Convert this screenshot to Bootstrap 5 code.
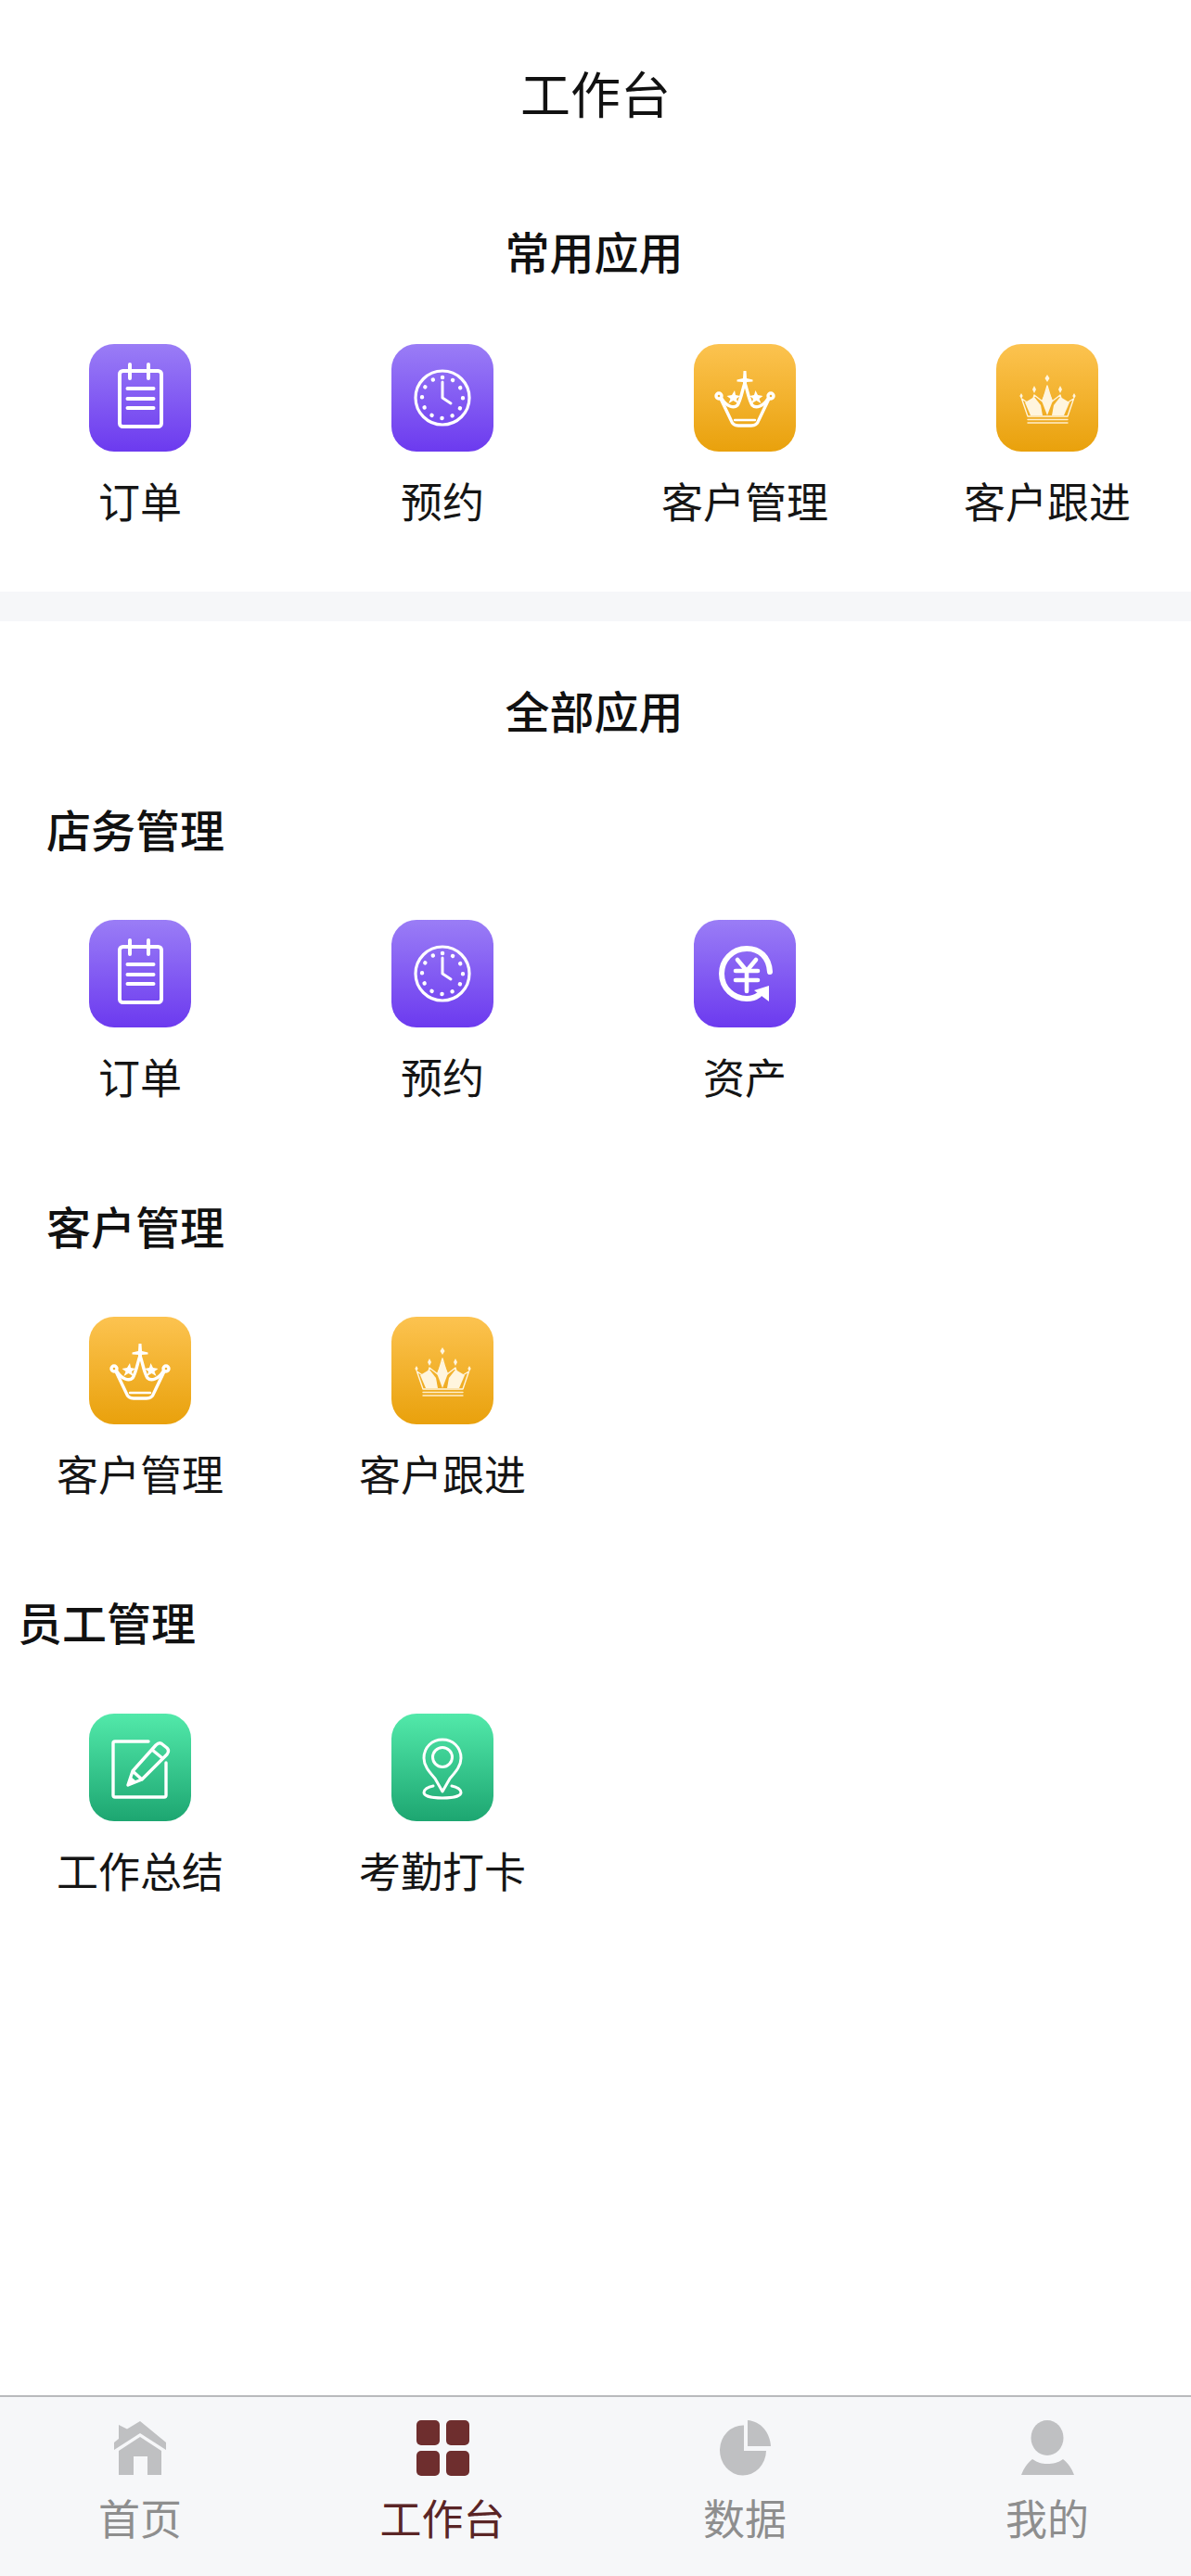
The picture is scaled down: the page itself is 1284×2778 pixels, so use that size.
<!DOCTYPE html>
<html lang="zh-CN">
<head>
    <meta charset="UTF-8">
    <meta name="viewport" content="width=device-width, initial-scale=1.0">
    <title>工作台</title>
    <link href="https://cdn.jsdelivr.net/npm/bootstrap@5.3.0/dist/css/bootstrap.min.css" rel="stylesheet">
    <style>
        html, body { height: 100%; }
        body {
            background: #fff;
            color: #111;
            font-family: "Noto Sans CJK SC", "Liberation Sans", sans-serif;
            overflow-x: hidden;
        }
        .page-wrap { min-height: 2778px; }
        .page-title { height: 206px; font-size: 54px; line-height: 200px; text-align: center; font-weight: 400; margin: 0; }
        .sec-head { font-size: 48px; line-height: 48px; font-weight: 500; margin: 0; }
        .head-common { padding: 40px 3px 0 0; text-align: center; }
        .head-all { padding: 71px 3px 0 0; text-align: center; }
        .head-shop { padding: 80px 0 0 50px; }
        .head-cust { padding: 104px 0 0 50px; }
        .head-staff { padding: 103px 0 0 19px; }
        .tile-grid { display: grid; grid-template-columns: repeat(4, 326px); margin-left: -12px; margin-top: 75px; }
        .grid-first { margin-top: 77px; }
        .staff-grid { margin-top: 76px; }
        .app-tile { display: flex; flex-direction: column; align-items: center; }
        .app-ico { width: 110px; height: 116px; border-radius: 27px; display: block; }
        .ico-purple { background: linear-gradient(#9a7df6, #6c3aef); }
        .ico-gold { background: linear-gradient(#fcc350, #e9a10c); }
        .ico-green { background: linear-gradient(#52e9aa, #1da671); }
        .app-name { font-size: 45px; line-height: 64px; margin-top: 21px; white-space: nowrap; color: #151515; }
        .stroke-w { fill: none; stroke: #fff; stroke-linecap: round; stroke-linejoin: round; }
        .gap-band { height: 32px; background: #f6f7f9; margin-top: 66px; }
        .tab-bar { height: 195px; background: #f6f7f9; border-top: 2px solid #b9babc; }
        .tab-grid { display: grid; grid-template-columns: repeat(4, 326px); margin-left: -12px; padding-top: 25px; }
        .tab-item { display: flex; flex-direction: column; align-items: center; color: #8e8e8e; font-size: 45px; line-height: 64px; }
        .tab-item svg { display: block; height: 60px; fill: #bfc0c2; margin-bottom: 13px; }
        .tab-on { color: #5a2526; }
        .tab-on svg { fill: #6e2e2e; }
    </style>
</head>
<body>
    <svg width="0" height="0" class="position-absolute">
        <defs>
            <symbol id="i-note" viewBox="0 0 110 116">
                <g class="stroke-w" stroke-width="4">
                    <rect x="33" y="29" width="45" height="60" rx="3.5"/>
                    <path d="M44 22V37M64 22V37M41.500 48H69.500M41.500 59H69.500M41.500 69H69.500"/>
                </g>
            </symbol>
            <symbol id="i-clock" viewBox="0 0 110 116">
                <circle class="stroke-w" stroke-width="3.200" cx="55" cy="58" r="29"/>
                <circle class="stroke-w" stroke-width="4.400" stroke-dasharray="0.100 11.419" cx="55" cy="58" r="22" transform="rotate(-90 55 58)"/>
                <path class="stroke-w" stroke-width="3" d="M55 41V58L64 64"/>
            </symbol>
            <symbol id="i-crown" viewBox="0 0 110 116">
                <g class="stroke-w" stroke-width="3.400">
                    <circle cx="27" cy="56" r="3"/>
                    <circle cx="83" cy="56" r="3"/>
                    <path d="M29 59L40 82Q42 88 48 88H62Q68 88 70 82L81 59"/>
                    <path d="M30 59C35 67 43 70 47 66C51 60 52 50 55 42C58 50 59 60 63 66C67 70 75 67 80 59"/>
                    <path d="M44 82H66" stroke-width="2.400"/>
                </g>
                <path fill="#fff" d="M53.500 29H56.500L57 37L63.500 38.500V40.500L57 41L56.800 46H53.200L53 41L46.500 40.500V38.500L53 37Z"/>
                <path fill="#fff" d="M44 50L45 55L50 56L46 59L47.500 64L42.500 61L37.500 64L39.500 59L35.500 56L41 55ZM66.500 50L69 55L74.500 56L70.500 59L72.500 64L67.500 61L62.500 64L64 59L60 56L65 55Z"/>
            </symbol>
            <symbol id="i-crown2" viewBox="0 0 110 116">
                <g fill="#fff5de">
                    <path d="M55 33L57.500 37L55 41L52.500 37ZM41 45L43 49L41 53L39 49ZM69 45L71 49L69 53L67 49ZM27 53L28.700 56L27 59L25.300 56ZM84 53L85.700 56L84 59L82.300 56Z"/>
                    <path d="M55 47L61 61L55 77L49 61Z"/>
                    <path d="M31 63L41 57L48 66L50 77H37Z"/>
                    <path d="M79 63L69 57L62 66L60 77H73Z"/>
                </g>
                <g class="stroke-w" stroke-width="1.400">
                    <path d="M27.500 59L34 78H77L83.500 59L72 66L69 55L60 62L55 45L50 62L41 55L38 66Z" stroke="#fff5de"/>
                    <path d="M34 81.500H77M34 85H77" stroke="#ffeecb"/>
                </g>
            </symbol>
            <symbol id="i-asset" viewBox="0 0 110 116">
                <path class="stroke-w" stroke-width="6" d="M82 56C81 40 71 31 57 31C41 31 30 44 30 58C30 74 43 85 57 85C62 85 66 84 70 81"/>
                <path fill="#fff" d="M81 88V71L65 76Z"/>
                <path class="stroke-w" stroke-width="4.600" stroke-linecap="butt" d="M47 43L57 55L67 43M45 55H69M45 65H69M57 55V77"/>
            </symbol>
            <symbol id="i-edit" viewBox="0 0 110 116">
                <path class="stroke-w" stroke-width="3.400" d="M64 30H28Q26 30 26 32V88Q26 90 28 90H81Q83 90 83 88V53"/>
                <path class="stroke-w" stroke-width="3.400" d="M42 77L47 62L72 34Q76 30 79 33L84 37Q87 40 84 44L57 71ZM68 39L79 48M47 62L57 71"/>
                <path fill="#fff" d="M42 77L45 68L51 73Z"/>
            </symbol>
            <symbol id="i-pin" viewBox="0 0 110 116">
                <g class="stroke-w" stroke-width="3">
                    <path d="M47 70C40 62 35 56 35 48C35 36 44 28 55 28C66 28 75 36 75 48C75 56 70 62 63 70L55 84Z"/>
                    <circle cx="55" cy="47" r="10.500"/>
                    <path d="M45 78C39 79 35 82 35 85C35 89 44 91 55 91C66 91 75 89 75 85C75 82 71 79 65 78"/>
                </g>
            </symbol>
        </defs>
    </svg>

    <div class="page-wrap d-flex flex-column">
        <h1 class="page-title">工作台</h1>

        <section>
            <h2 class="sec-head head-common">常用应用</h2>
            <div class="tile-grid grid-first">
                <div class="app-tile"><svg class="app-ico ico-purple"><use href="#i-note"/></svg><span class="app-name">订单</span></div>
                <div class="app-tile"><svg class="app-ico ico-purple"><use href="#i-clock"/></svg><span class="app-name">预约</span></div>
                <div class="app-tile"><svg class="app-ico ico-gold"><use href="#i-crown"/></svg><span class="app-name">客户管理</span></div>
                <div class="app-tile"><svg class="app-ico ico-gold"><use href="#i-crown2"/></svg><span class="app-name">客户跟进</span></div>
            </div>
        </section>

        <div class="gap-band"></div>

        <section>
            <h2 class="sec-head head-all">全部应用</h2>

            <h3 class="sec-head head-shop">店务管理</h3>
            <div class="tile-grid">
                <div class="app-tile"><svg class="app-ico ico-purple"><use href="#i-note"/></svg><span class="app-name">订单</span></div>
                <div class="app-tile"><svg class="app-ico ico-purple"><use href="#i-clock"/></svg><span class="app-name">预约</span></div>
                <div class="app-tile"><svg class="app-ico ico-purple"><use href="#i-asset"/></svg><span class="app-name">资产</span></div>
            </div>

            <h3 class="sec-head head-cust">客户管理</h3>
            <div class="tile-grid">
                <div class="app-tile"><svg class="app-ico ico-gold"><use href="#i-crown"/></svg><span class="app-name">客户管理</span></div>
                <div class="app-tile"><svg class="app-ico ico-gold"><use href="#i-crown2"/></svg><span class="app-name">客户跟进</span></div>
            </div>

            <h3 class="sec-head head-staff">员工管理</h3>
            <div class="tile-grid staff-grid">
                <div class="app-tile"><svg class="app-ico ico-green"><use href="#i-edit"/></svg><span class="app-name">工作总结</span></div>
                <div class="app-tile"><svg class="app-ico ico-green"><use href="#i-pin"/></svg><span class="app-name">考勤打卡</span></div>
            </div>
        </section>

        <nav class="tab-bar mt-auto">
            <div class="tab-grid">
                <div class="tab-item">
                    <svg viewBox="0 0 56 60" width="56"><path d="M28 1L56 24V32L28 14L0 32V24L5 20V5L14 9.500Z"/><path d="M28 18L51 33V59H36V39H21V59H5V33Z"/></svg>
                    <span>首页</span>
                </div>
                <div class="tab-item tab-on">
                    <svg viewBox="0 0 57 60" width="57"><rect width="25" height="27" rx="5"/><rect x="32" width="25" height="27" rx="5"/><rect y="33" width="25" height="27" rx="5"/><rect x="32" y="33" width="25" height="27" rx="5"/></svg>
                    <span>工作台</span>
                </div>
                <div class="tab-item">
                    <svg viewBox="0 0 55 60" width="55"><path d="M26 5.500A25 27 0 1 0 50 33H26Z"/><path d="M30 0C44 1 54 13 55 28H30Z"/></svg>
                    <span>数据</span>
                </div>
                <div class="tab-item">
                    <svg viewBox="0 0 57 60" width="57"><ellipse cx="28" cy="19" rx="17.500" ry="19"/><path d="M0 59C3 51 7 46 12 42C18 46 22 47 28 47C34 47 40 46 45 42C50 46 54 51 57 59Z"/></svg>
                    <span>我的</span>
                </div>
            </div>
        </nav>
    </div>
    <script src="https://cdn.jsdelivr.net/npm/bootstrap@5.3.0/dist/js/bootstrap.bundle.min.js"></script>
</body>
</html>
